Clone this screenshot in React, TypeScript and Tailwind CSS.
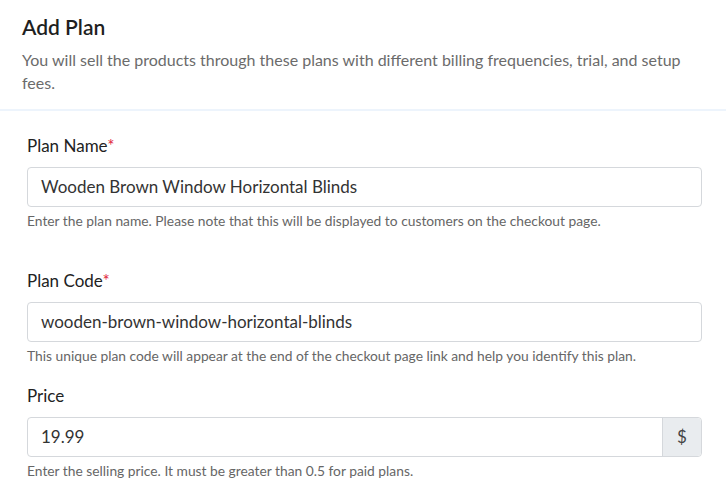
const font = { fontFamily: "Lato, 'Open Sans', sans-serif" }

function Field({
  label,
  required,
  value,
  help,
  addon,
  className,
}: {
  label: string
  required?: boolean
  value: string
  help: string
  addon?: string
  className?: string
}) {
  return (
    <div className={"flex flex-col " + (className ?? "")}>
      <label className="text-[17px] leading-[22px] text-[#222]">
        {label}
        {required && <span className="text-[#e0263c]">*</span>}
      </label>
      <div className="mt-[10px] flex h-[40px] w-full rounded-[4px] border border-[#d5d8dc] bg-white">
        <div className="flex flex-1 items-center px-[13px] text-[17px] text-[#333]">{value}</div>
        {addon && (
          <div className="flex w-[39px] items-center justify-center rounded-r-[4px] border-l border-[#d5d8dc] bg-[#e9ecef] text-[17px] text-[#444]">
            {addon}
          </div>
        )}
      </div>
      <p className="mt-[5px] text-[13.8px] leading-[18px] text-[#666]">{help}</p>
    </div>
  )
}

export default function App() {
  return (
    <div className="min-h-screen w-full bg-white" style={font}>
      <div className="px-[22px] pt-[14px] pb-[15px] pr-[14px]">
        <h1 className="text-[21px] font-semibold leading-[26px] text-[#1f1f1f]">Add Plan</h1>
        <p className="mt-[8px] text-[16px] leading-[23px] text-[#6b6b6b]">
          You will sell the products through these plans with different billing frequencies, trial, and setup fees.
        </p>
      </div>
      <div className="h-[2px] w-full bg-[#edf4fc]" />
      <div className="flex flex-col px-[27px] pt-[24px] pr-[24px]">
        <Field
          label="Plan Name"
          required
          value="Wooden Brown Window Horizontal Blinds"
          help="Enter the plan name. Please note that this will be displayed to customers on the checkout page."
        />
        <Field
          className="mt-[40px]"
          label="Plan Code"
          required
          value="wooden-brown-window-horizontal-blinds"
          help="This unique plan code will appear at the end of the checkout page link and help you identify this plan."
        />
        <Field
          className="mt-[20px]"
          label="Price"
          value="19.99"
          addon="$"
          help="Enter the selling price. It must be greater than 0.5 for paid plans."
        />
      </div>
    </div>
  )
}
